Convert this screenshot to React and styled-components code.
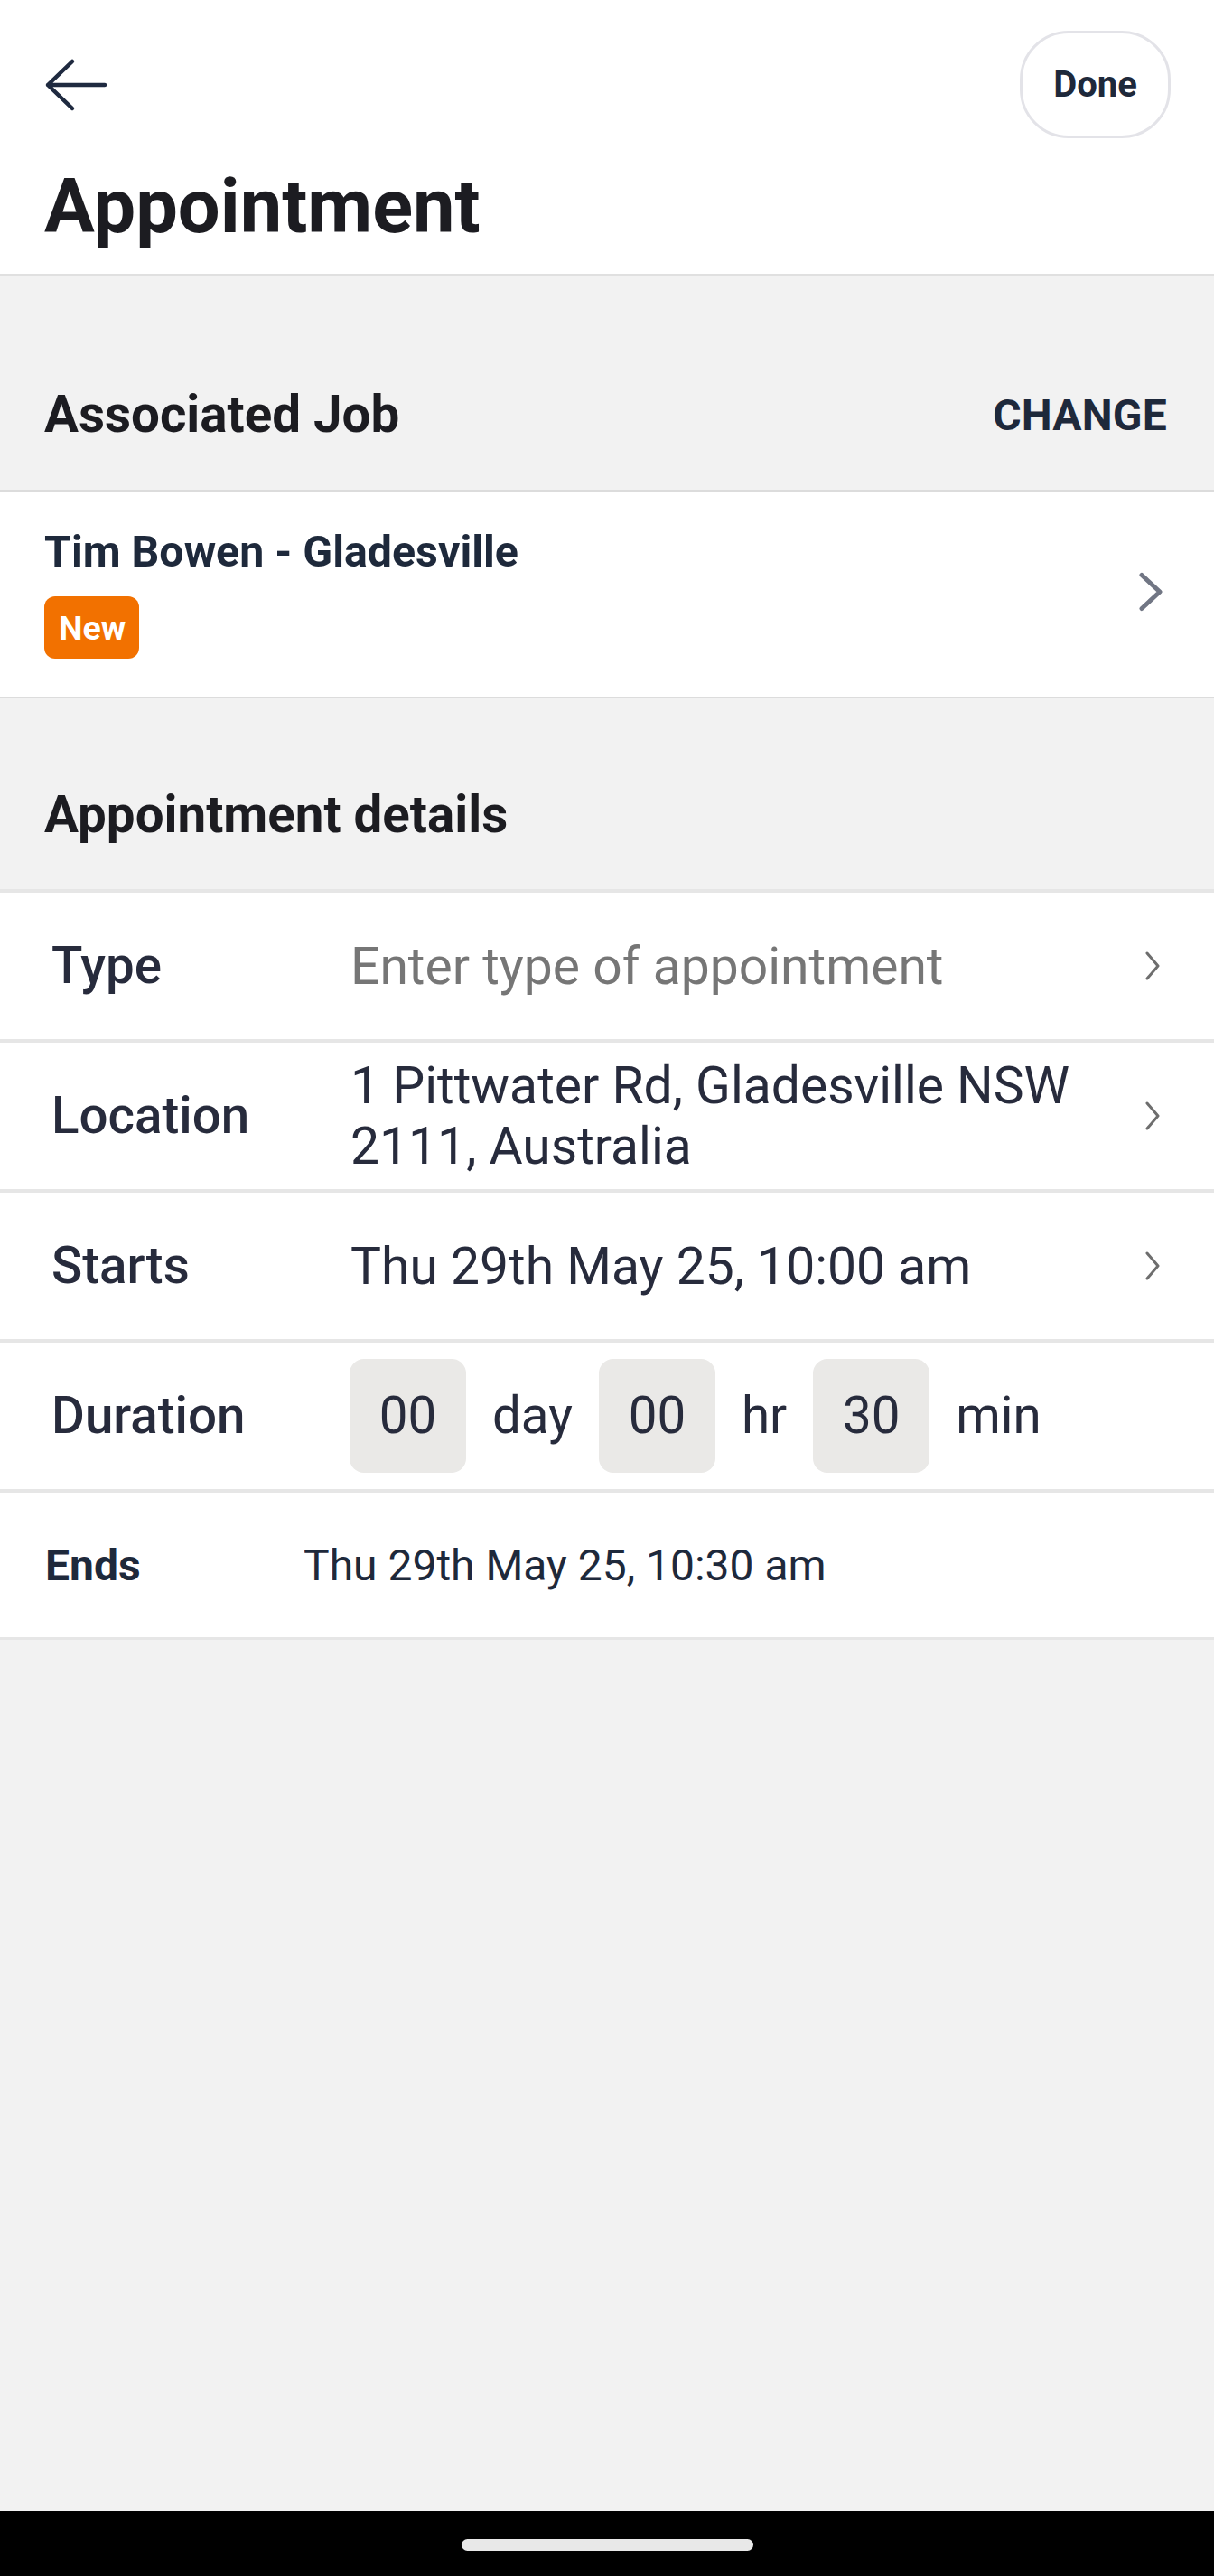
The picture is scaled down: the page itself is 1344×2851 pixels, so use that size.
import React from "react";
import styled, { createGlobalStyle } from "styled-components";

const GlobalStyle = createGlobalStyle`
  html, body { margin: 0; padding: 0; background: #f2f2f2; }
  body { font-family: Roboto, "Noto Sans", "Liberation Sans", sans-serif; -webkit-font-smoothing: antialiased; }
  * { box-sizing: border-box; }
`;

const Page = styled.div`
  display: flex;
  flex-direction: column;
  min-height: 2851px;
  background: #f2f2f2;
`;

const Header = styled.header`
  background: #ffffff;
  padding: 34px 48px 24px 49px;
  border-bottom: 3px solid #e0e0e0;
`;

const TopBar = styled.div`
  display: flex;
  align-items: center;
  justify-content: space-between;
  height: 119px;
`;

const BackButton = styled.button`
  display: flex;
  align-items: center;
  justify-content: center;
  width: 70px;
  height: 60px;
  padding: 0;
  border: none;
  background: transparent;
  color: #1f2a40;
`;

const DoneButton = styled.button`
  width: 167px;
  height: 119px;
  border: 3px solid #e3e3e8;
  border-radius: 54px;
  background: #ffffff;
  font-family: Roboto, "Liberation Sans", sans-serif;
  font-size: 40px;
  font-weight: 700;
  color: #1e293b;
  padding: 0;
`;

const Title = styled.h1`
  margin: 26px 0 0;
  font-size: 83px;
  line-height: 100px;
  font-weight: 700;
  color: #1c1c21;
`;

const Content = styled.main`
  flex: 1;
  display: flex;
  flex-direction: column;
  background: #f2f2f2;
`;

const SectionHeader = styled.div`
  display: flex;
  align-items: center;
  justify-content: space-between;
  padding: ${(p) => p.$top}px 52px 0 49px;
  height: ${(p) => p.$top + p.$height}px;
`;

const SectionTitle = styled.h2`
  margin: 0;
  font-size: 56.5px;
  line-height: 67px;
  font-weight: 700;
  color: #1c1c21;
`;

const TextAction = styled.button`
  border: none;
  background: transparent;
  padding: 0;
  font-family: Roboto, "Liberation Sans", sans-serif;
  font-size: 48px;
  font-weight: 700;
  letter-spacing: 0.2px;
  color: #1e293b;
`;

const JobRow = styled.div`
  display: flex;
  align-items: center;
  justify-content: space-between;
  background: #ffffff;
  padding: 37px 55px 42px 49px;
  border-top: 2px solid #dcdcdc;
  border-bottom: 2px solid #dcdcdc;
`;

const JobInfo = styled.div`
  display: flex;
  flex-direction: column;
  align-items: flex-start;
  gap: 19px;
`;

const JobTitle = styled.div`
  font-size: 48.3px;
  line-height: 60px;
  font-weight: 700;
  color: #1e293b;
`;

const Badge = styled.span`
  display: inline-flex;
  align-items: center;
  height: 69px;
  padding: 0 15px 0 16px;
  border-radius: 12px;
  background: #f27100;
  color: #ffffff;
  font-size: 37.5px;
  font-weight: 700;
`;

const DetailList = styled.div`
  display: flex;
  flex-direction: column;
  background: #ffffff;
  border-bottom: 3px solid #e6e6e6;
`;

const DetailRow = styled.div`
  display: grid;
  grid-template-columns: 331px 1fr auto;
  align-items: center;
  min-height: 166px;
  padding: 0 56px 0 57px;
  border-top: 4px solid #e6e6e6;
`;

const Label = styled.div`
  font-size: 56.5px;
  line-height: 67px;
  font-weight: 500;
  color: #272b3c;
`;

const Value = styled.div`
  font-size: 57px;
  line-height: 67px;
  font-weight: 400;
  color: ${(p) => (p.$placeholder ? "#767676" : "#272b3c")};
  padding-right: 20px;
`;

const DurationFields = styled.div`
  display: flex;
  align-items: center;
  gap: 29px;
  margin-left: -1px;
`;

const NumberBox = styled.div`
  display: flex;
  align-items: center;
  justify-content: center;
  width: 129px;
  height: 126px;
  border-radius: 16px;
  background: #eae9e7;
  font-size: 56.5px;
  color: #272b3c;
`;

const Unit = styled.span`
  font-size: 56.5px;
  line-height: 67px;
  color: #272b3c;
`;

const EndsRow = styled.div`
  display: grid;
  grid-template-columns: 286px 1fr;
  align-items: center;
  height: 164px;
  padding: 0 56px 0 50px;
  border-top: 4px solid #e6e6e6;
`;

const EndsLabel = styled.div`
  font-size: 48px;
  font-weight: 700;
  color: #1e293b;
`;

const EndsValue = styled.div`
  font-size: 48px;
  font-weight: 400;
  color: #1e293b;
`;

const NavBar = styled.div`
  height: 72px;
  background: #000000;
  display: flex;
  align-items: center;
  justify-content: center;
`;

const HomeIndicator = styled.div`
  width: 323px;
  height: 13px;
  border-radius: 7px;
  background: #e8e8e8;
  margin-top: 2px;
`;

const BackArrow = () => (
  <svg width="70" height="60" viewBox="0 0 70 60" fill="none">
    <path
      d="M4 30 H67 M31 4 L4 30 L31 56"
      stroke="currentColor"
      strokeWidth="4.5"
      strokeLinecap="round"
      strokeLinejoin="round"
    />
  </svg>
);

const JobChevron = () => (
  <svg width="30" height="48" viewBox="0 0 30 48" fill="none">
    <path
      d="M5 5.5 L25 24 L5 42.5"
      stroke="#717684"
      strokeWidth="5"
      strokeLinecap="round"
      strokeLinejoin="round"
    />
  </svg>
);

const RowChevron = () => (
  <svg width="24" height="36" viewBox="0 0 24 36" fill="none">
    <path
      d="M6 4 L18 18 L6 32"
      stroke="#6e6e6e"
      strokeWidth="3"
      strokeLinecap="round"
      strokeLinejoin="round"
    />
  </svg>
);

export default function App() {
  return (
    <>
      <GlobalStyle />
      <Page>
        <Header>
          <TopBar>
            <BackButton aria-label="Back">
              <BackArrow />
            </BackButton>
            <DoneButton>Done</DoneButton>
          </TopBar>
          <Title>Appointment</Title>
        </Header>
        <Content>
          <SectionHeader $top={70} $height={166}>
            <SectionTitle>Associated Job</SectionTitle>
            <TextAction>CHANGE</TextAction>
          </SectionHeader>
          <JobRow>
            <JobInfo>
              <JobTitle>Tim Bowen - Gladesville</JobTitle>
              <Badge>New</Badge>
            </JobInfo>
            <JobChevron />
          </JobRow>
          <SectionHeader $top={47} $height={164}>
            <SectionTitle>Appointment details</SectionTitle>
          </SectionHeader>
          <DetailList>
            <DetailRow>
              <Label>Type</Label>
              <Value $placeholder>Enter type of appointment</Value>
              <RowChevron />
            </DetailRow>
            <DetailRow>
              <Label>Location</Label>
              <Value>1 Pittwater Rd, Gladesville NSW 2111, Australia</Value>
              <RowChevron />
            </DetailRow>
            <DetailRow>
              <Label>Starts</Label>
              <Value>Thu 29th May 25, 10:00 am</Value>
              <RowChevron />
            </DetailRow>
            <DetailRow>
              <Label>Duration</Label>
              <DurationFields>
                <NumberBox>00</NumberBox>
                <Unit>day</Unit>
                <NumberBox>00</NumberBox>
                <Unit>hr</Unit>
                <NumberBox>30</NumberBox>
                <Unit>min</Unit>
              </DurationFields>
              <span />
            </DetailRow>
            <EndsRow>
              <EndsLabel>Ends</EndsLabel>
              <EndsValue>Thu 29th May 25, 10:30 am</EndsValue>
            </EndsRow>
          </DetailList>
        </Content>
        <NavBar>
          <HomeIndicator />
        </NavBar>
      </Page>
    </>
  );
}
